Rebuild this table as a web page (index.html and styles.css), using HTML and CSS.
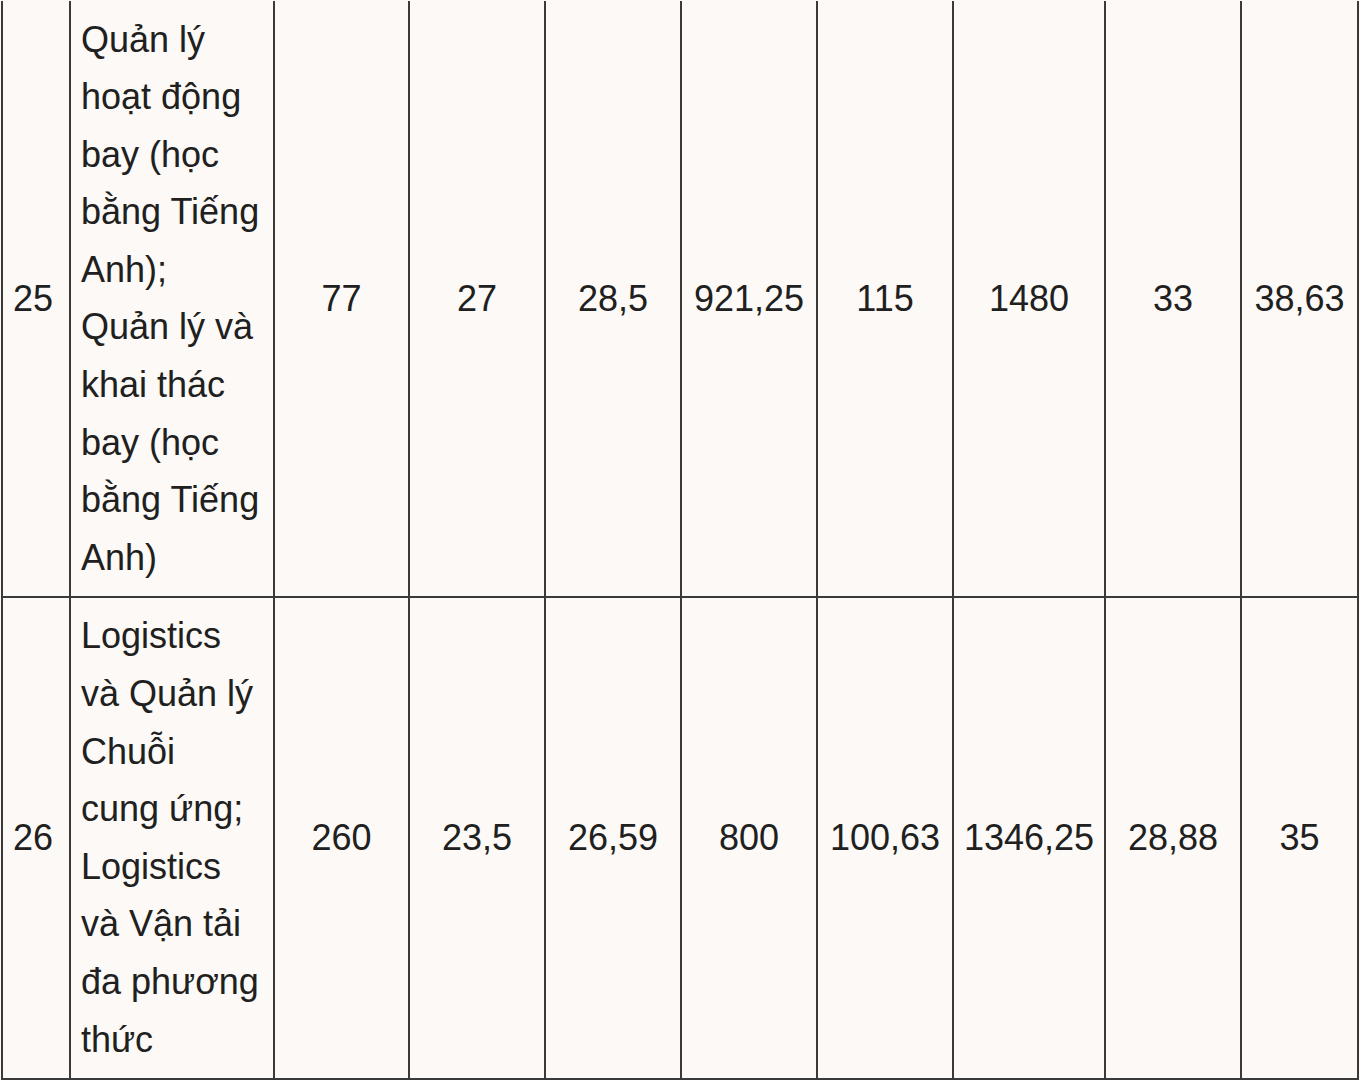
FILE: index.html
```html
<!DOCTYPE html>
<html lang="vi">
<head>
<meta charset="utf-8">
<title>Bảng điểm</title>
<link rel="stylesheet" href="styles.css">
</head>
<body>
<table class="score-table">
  <colgroup>
    <col class="c-no">
    <col class="c-name">
    <col class="c-num3">
    <col class="c-num">
    <col class="c-num">
    <col class="c-num">
    <col class="c-num">
    <col class="c-wide">
    <col class="c-num">
    <col class="c-last">
  </colgroup>
  <tbody>
    <tr class="first-row">
      <td class="no">25</td>
      <td class="name">Quản lý hoạt động bay (học bằng Tiếng Anh);<br>Quản lý và khai thác bay (học bằng Tiếng Anh)</td>
      <td class="num">77</td>
      <td class="num">27</td>
      <td class="num">28,5</td>
      <td class="num">921,25</td>
      <td class="num">115</td>
      <td class="num">1480</td>
      <td class="num">33</td>
      <td class="num">38,63</td>
    </tr>
    <tr>
      <td class="no">26</td>
      <td class="name">Logistics và Quản lý Chuỗi cung ứng;<br>Logistics và Vận tải đa phương thức</td>
      <td class="num">260</td>
      <td class="num">23,5</td>
      <td class="num">26,59</td>
      <td class="num">800</td>
      <td class="num">100,63</td>
      <td class="num">1346,25</td>
      <td class="num">28,88</td>
      <td class="num">35</td>
    </tr>
  </tbody>
</table>
</body>
</html>
```

FILE: styles.css
```css
html, body {
  margin: 0;
  padding: 0;
  background: #fcf9f6;
}

body {
  font-family: "Liberation Sans", Arial, Helvetica, sans-serif;
  color: #202020;
  font-size: 36px;
  line-height: 1.6;
}

.score-table {
  border-collapse: collapse;
  table-layout: fixed;
  width: 1358px;
  margin: 1px 0 0 1px;
  background: #fcf9f6;
}

.c-no { width: 68px; }
.c-name { width: 204px; }
.c-num3 { width: 135px; }
.c-num { width: 136px; }
.c-wide { width: 152px; }
.c-last { width: 117px; }

.score-table td {
  border: 2px solid #3a3a3a;
  padding: 9.5px 9px;
  vertical-align: middle;
}

.score-table .first-row td {
  border-top: 0;
}

.score-table td.no {
  text-align: left;
  padding-left: 10px;
}

.score-table td.name {
  text-align: left;
  padding-left: 10px;
  padding-right: 10px;
}

.score-table td.num {
  text-align: center;
  white-space: nowrap;
}
```
